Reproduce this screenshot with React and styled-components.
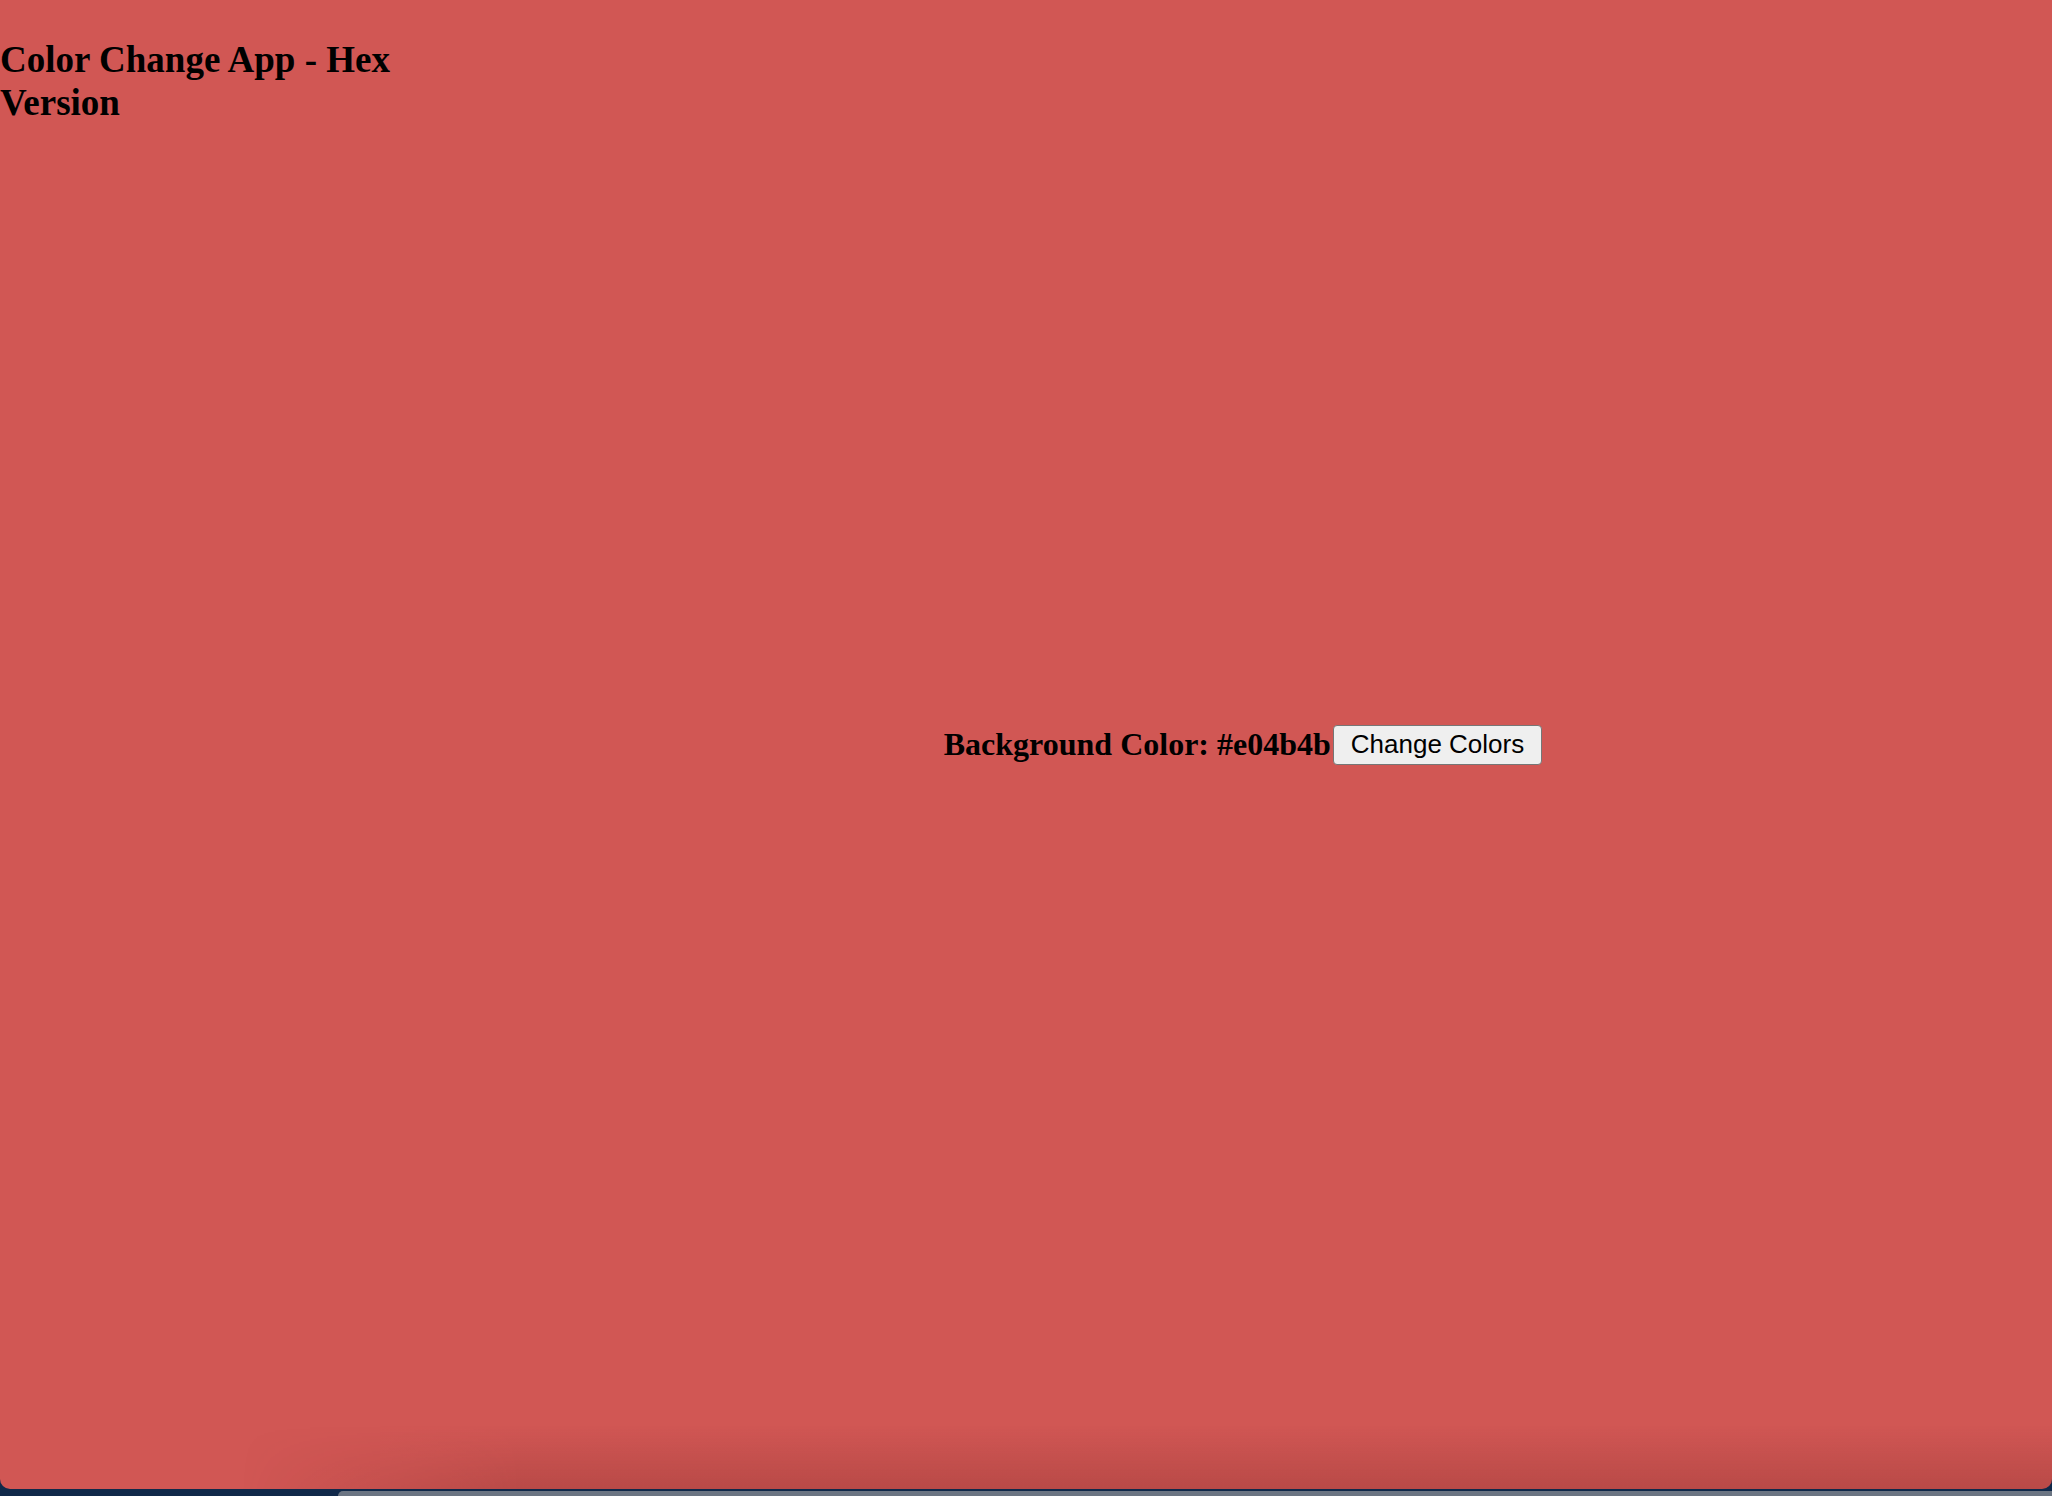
import { useState } from 'react';
import styled, { createGlobalStyle } from 'styled-components';

// the screenshot renders #e04b4b a little duller, so the first colour is drawn with that tone
const START_HEX = '#e04b4b';
const START_TONE = '#d15754';

const randomHex = () =>
	'#' +
	Math.floor(Math.random() * 0xffffff)
		.toString(16)
		.padStart(6, '0');

function App() {
	const [hex, setHex] = useState(START_HEX);

	return (
		<>
			<GlobalStyle />
			<Desktop>
				<Window background={hex === START_HEX ? START_TONE : hex}>
					<Title>Color Change App - Hex Version</Title>
					<Main>
						<Label>{`Background Color: ${hex}`}</Label>
						<Button onClick={() => setHex(randomHex())}>Change Colors</Button>
					</Main>
				</Window>
				<Dock>
					<DockPanel />
				</Dock>
			</Desktop>
		</>
	);
}

const GlobalStyle = createGlobalStyle`
	html,
	body {
		margin: 0;
		padding: 0;
		background: #10294a;
		overflow: hidden;
	}

	* {
		box-sizing: border-box;
	}
`;

const Desktop = styled.div`
	display: flex;
	flex-direction: column;
	width: 100%;
	height: 1496px;
	background: #10294a;
`;

const Window = styled.div`
	position: relative;
	display: grid;
	grid-template-columns: 434px 1fr;
	height: 1489px;
	background: ${(props) => props.background};
	border-radius: 0 0 10px 10px;
	overflow: hidden;

	&::after {
		content: '';
		position: absolute;
		left: 0;
		right: 0;
		bottom: 0;
		height: 64px;
		background: linear-gradient(to bottom, rgba(70, 10, 10, 0), rgba(70, 10, 10, 0.17));
		-webkit-mask-image: linear-gradient(to right, transparent 240px, #000 520px);
		mask-image: linear-gradient(to right, transparent 240px, #000 520px);
		pointer-events: none;
	}
`;

const Title = styled.h1`
	margin: 38px 0 0;
	font-family: 'Liberation Serif', 'Times New Roman', serif;
	font-size: 37px;
	font-weight: 700;
	line-height: 43px;
	color: #000000;
`;

const Main = styled.div`
	display: flex;
	flex-direction: row;
	align-items: center;
	justify-content: center;
`;

const Label = styled.h2`
	margin: 0;
	font-family: 'Liberation Serif', 'Times New Roman', serif;
	font-size: 32px;
	font-weight: 700;
	line-height: 37px;
	color: #000000;
`;

const Button = styled.button`
	display: flex;
	align-items: center;
	justify-content: center;
	height: 40px;
	margin-left: 2px;
	padding: 0 17px;
	font-family: 'Liberation Sans', Arial, sans-serif;
	font-size: 26px;
	color: #000000;
	background: #efefef;
	border: 1.5px solid #767676;
	border-radius: 4px;
	cursor: pointer;
`;

const Dock = styled.div`
	display: flex;
	flex: 1;
	padding: 2px 0 0 338px;
	background: #10294a;
`;

const DockPanel = styled.div`
	flex: 1;
	background: #6b7583;
	border-top-left-radius: 8px;
`;

export default App;
